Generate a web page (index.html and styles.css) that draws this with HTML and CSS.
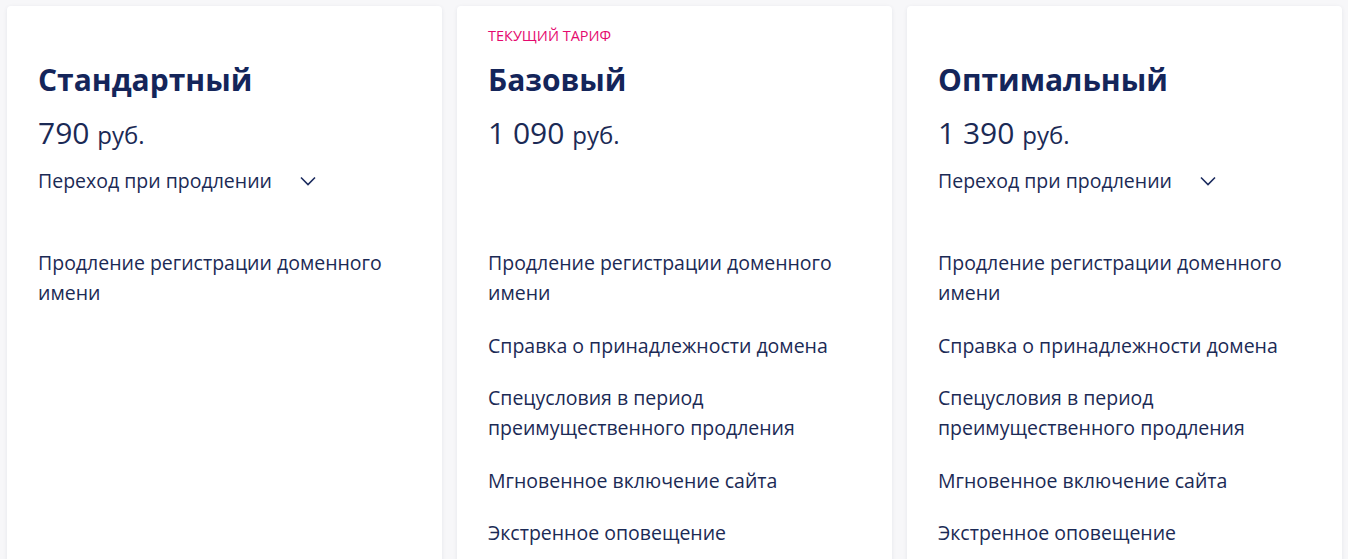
FILE: index.html
```html
<!DOCTYPE html>
<html lang="ru">
<head>
<meta charset="utf-8">
<title>Тарифы</title>
<link rel="stylesheet" href="styles.css">
</head>
<body>
<div class="plans">
  <div class="card">
    <div class="label"></div>
    <h2 class="title">Стандартный</h2>
    <div class="price"><span class="amount">790 </span><span class="cur">руб.</span></div>
    <div class="switch">
      <button class="switch-btn">Переход при продлении
        <svg class="chev" width="16" height="10" viewBox="0 0 16 10"><path d="M1 1.5 L8 8.5 L15 1.5" fill="none" stroke="#1b2b5e" stroke-width="1.6"/></svg>
      </button>
    </div>
    <ul class="features">
      <li>Продление регистрации доменного имени</li>
    </ul>
  </div>
  <div class="card">
    <div class="label">Текущий тариф</div>
    <h2 class="title">Базовый</h2>
    <div class="price"><span class="amount">1 090 </span><span class="cur">руб.</span></div>
    <div class="switch"></div>
    <ul class="features">
      <li>Продление регистрации доменного имени</li>
      <li>Справка о принадлежности домена</li>
      <li>Спецусловия в период преимущественного продления</li>
      <li>Мгновенное включение сайта</li>
      <li>Экстренное оповещение</li>
    </ul>
  </div>
  <div class="card">
    <div class="label"></div>
    <h2 class="title">Оптимальный</h2>
    <div class="price"><span class="amount">1 390 </span><span class="cur">руб.</span></div>
    <div class="switch">
      <button class="switch-btn">Переход при продлении
        <svg class="chev" width="16" height="10" viewBox="0 0 16 10"><path d="M1 1.5 L8 8.5 L15 1.5" fill="none" stroke="#1b2b5e" stroke-width="1.6"/></svg>
      </button>
    </div>
    <ul class="features">
      <li>Продление регистрации доменного имени</li>
      <li>Справка о принадлежности домена</li>
      <li>Спецусловия в период преимущественного продления</li>
      <li>Мгновенное включение сайта</li>
      <li>Экстренное оповещение</li>
    </ul>
  </div>
</div>
</body>
</html>
```
FILE: styles.css
```css
html, body {
  margin: 0;
  padding: 0;
  background: #f7f7f9;
  font-family: "Open Sans", "Noto Sans", sans-serif;
  color: #1b2a55;
  height: 559px;
  overflow: hidden;
}

.plans {
  display: flex;
  gap: 15px;
  padding: 6px 6px 0 7px;
  align-items: stretch;
}

.card {
  flex: 1 1 0;
  background: #fff;
  border-radius: 4px;
  box-shadow: 0 1px 4px rgba(30, 40, 80, 0.08);
  padding: 21px 31px 40px;
  min-height: 600px;
  box-sizing: border-box;
}

.label {
  height: 18px;
  font-size: 14.5px;
  line-height: 18px;
  text-transform: uppercase;
  color: #e5096e;
}

.title {
  margin: 15px 0 0;
  font-size: 30px;
  line-height: 40px;
  font-weight: 700;
  color: #14255a;
}

.price {
  margin-top: 13px;
  line-height: 40px;
}

.amount {
  font-size: 30px;
}

.cur {
  font-size: 24px;
}

.switch {
  margin-top: 10px;
  height: 80px;
}

.switch-btn {
  display: flex;
  align-items: center;
  gap: 28px;
  padding: 0;
  border: 0;
  background: none;
  font-family: inherit;
  font-size: 19.5px;
  line-height: 26px;
  color: #1b2a55;
}

.chev {
  display: block;
}

.features {
  list-style: none;
  margin: 0;
  padding: 0;
  display: flex;
  flex-direction: column;
  gap: 22.5px;
}

.features li {
  font-size: 19.5px;
  line-height: 30px;
}
```
